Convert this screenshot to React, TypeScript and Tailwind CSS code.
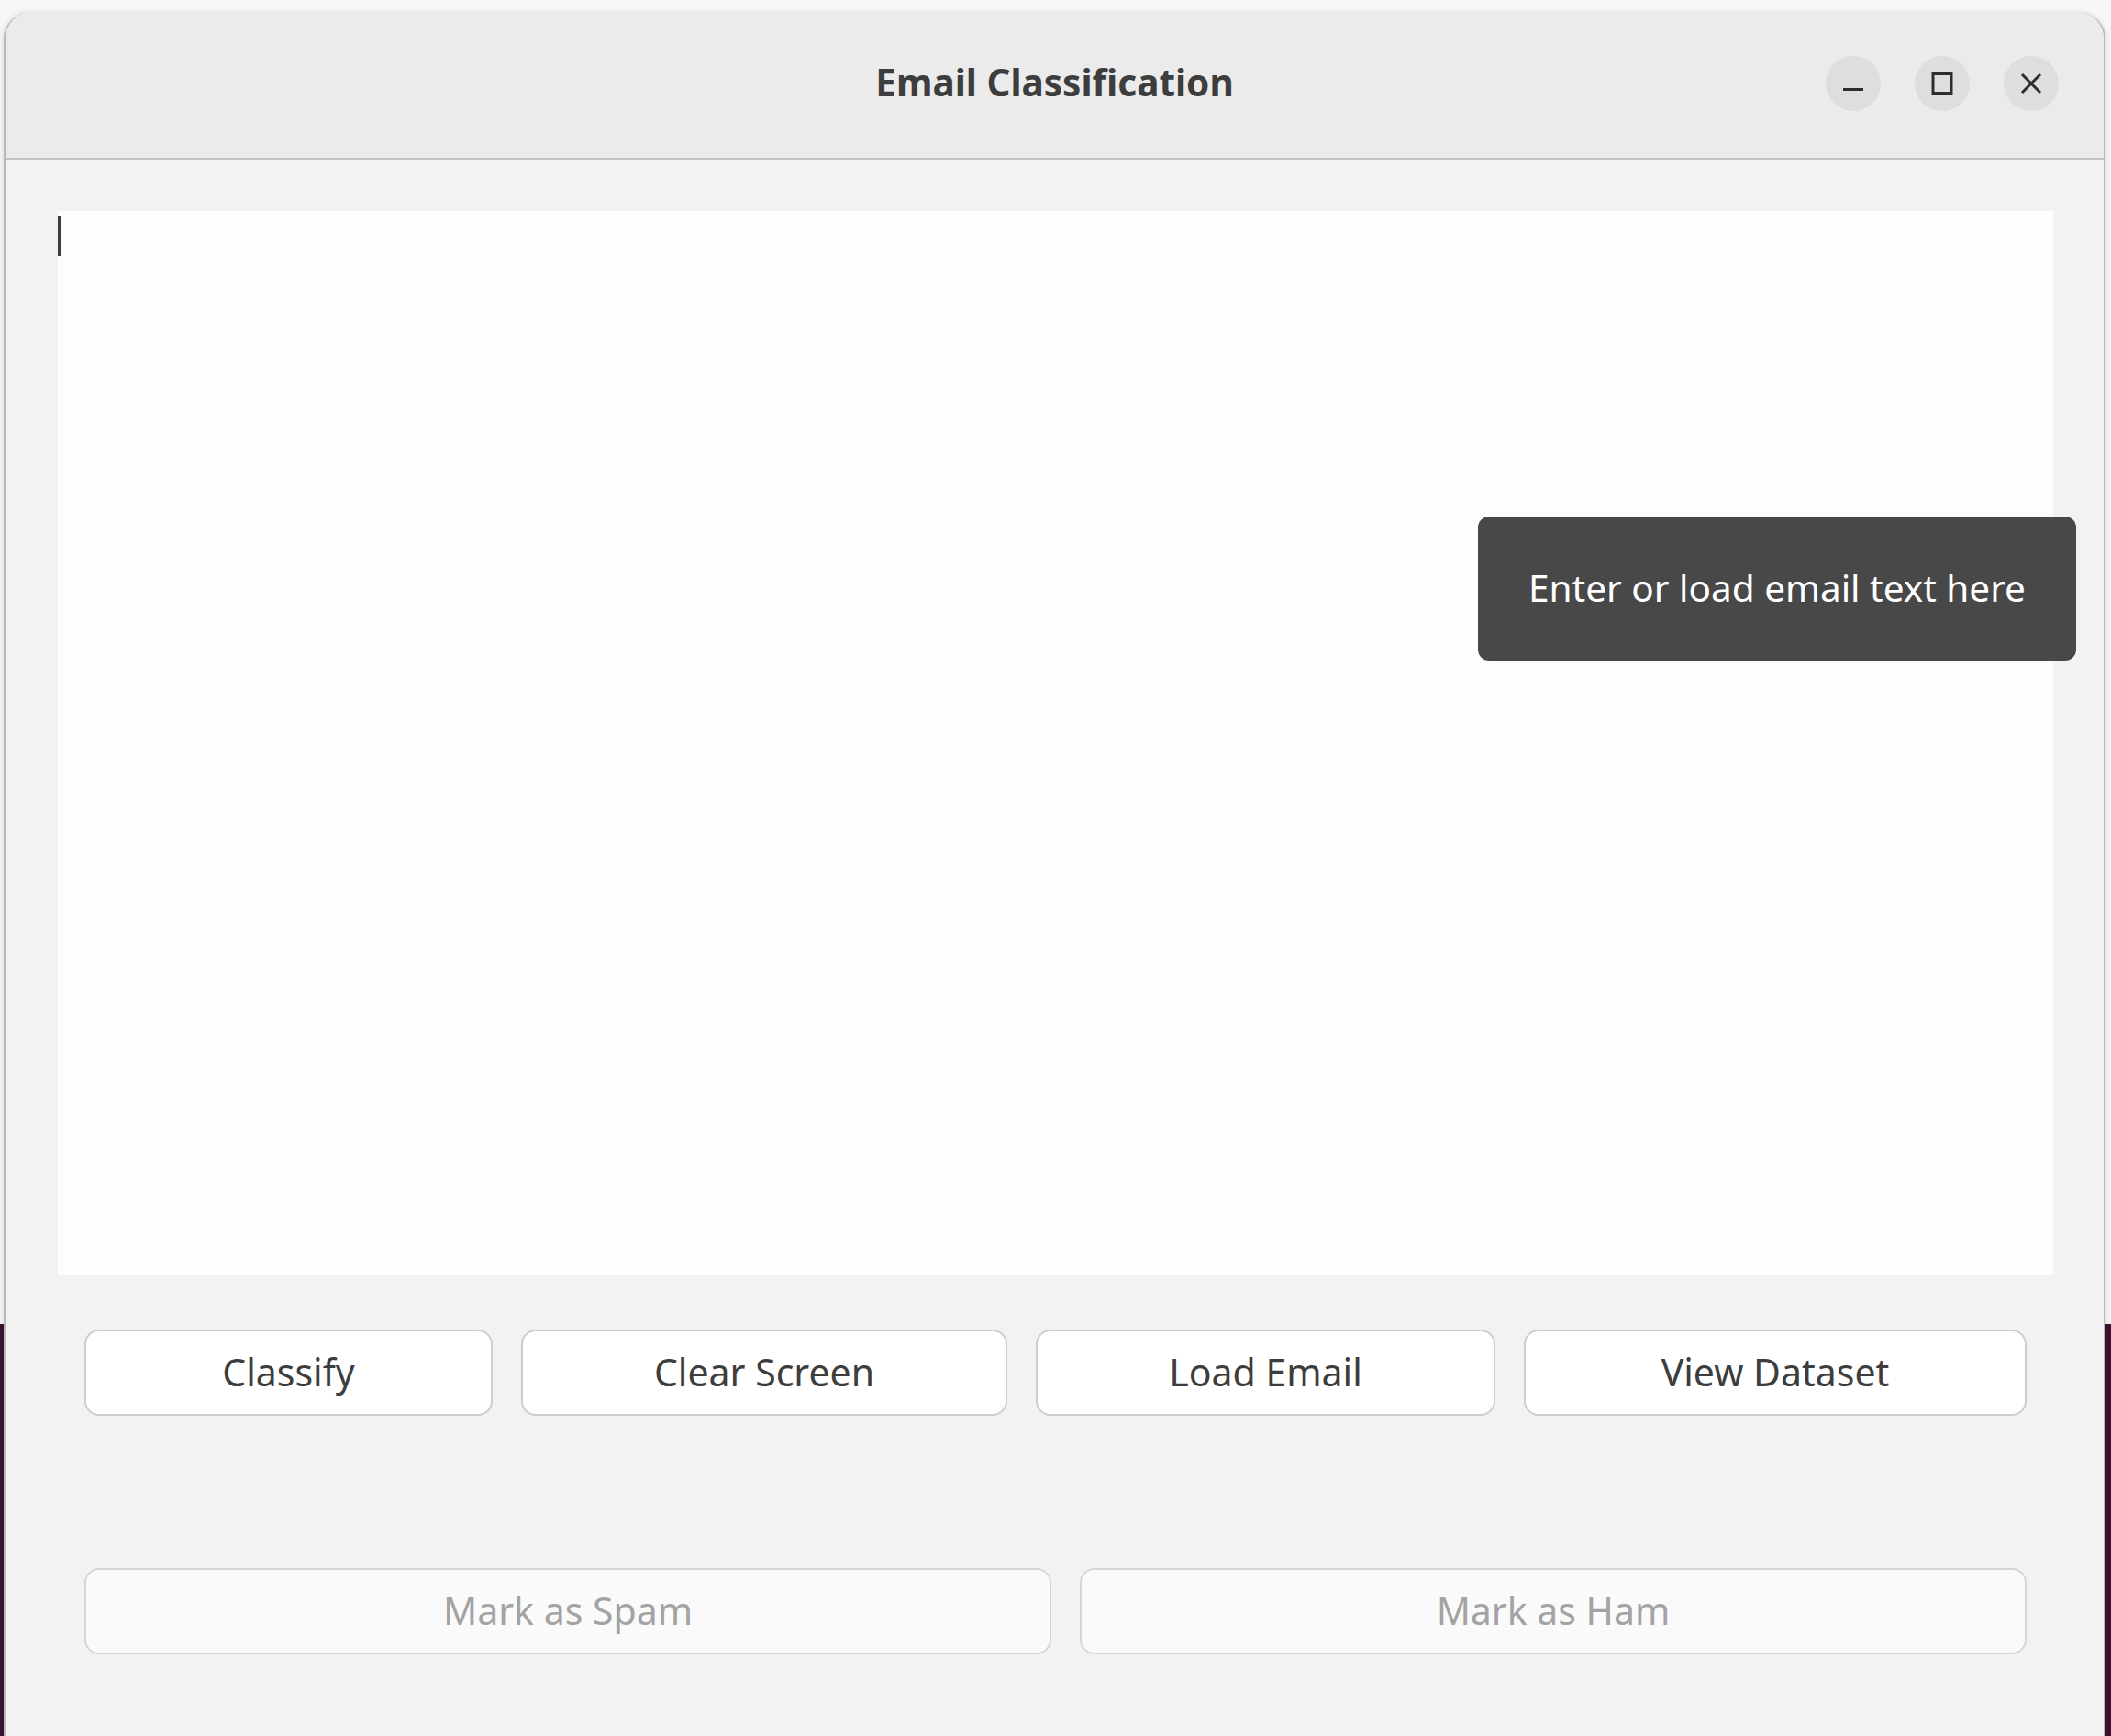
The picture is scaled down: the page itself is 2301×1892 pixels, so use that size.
import React from 'react';

const font = { fontFamily: '"Noto Sans", "Open Sans", sans-serif' };

const ActionButton = ({ label, width, disabled }: { label: string; width: string; disabled?: boolean }) => (
  <button
    disabled={disabled}
    className={
      disabled
        ? `${width} h-[94px] shrink-0 rounded-[16px] border-2 border-[#d6d6d6] bg-[#fafafa] text-[41px] text-[#a3a3a3]`
        : `${width} h-[94px] shrink-0 rounded-[16px] border-2 border-[#cdcdcd] bg-white text-[41px] text-[#3d3d3d]`
    }
  >
    {label}
  </button>
);

const App = () => {
  return (
    <div className="relative w-[2301px] h-[1892px] overflow-hidden" style={font}>
      {/* desktop behind the window */}
      <div className="flex flex-col h-full">
        <div className="h-[1443px] bg-[#f7f7f7]" />
        <div className="flex-1 bg-[#3a1230]" />
      </div>

      {/* window */}
      <div className="absolute left-[4px] top-[14px] w-[2291px] h-[1900px] flex flex-col rounded-t-[28px] bg-[#f2f2f2] border-l-2 border-r-2 border-[#b9b9b9] shadow-[0_0_6px_rgba(0,0,0,0.15)]">
        {/* title bar */}
        <div className="relative h-[160px] shrink-0 flex items-center justify-center pb-[6px] rounded-t-[28px] bg-[#ebebeb] border-b-2 border-[#c4c4c4]">
          <span className="text-[40.5px] font-bold text-[#3d3d3d]">Email Classification</span>
          <div className="absolute right-[49px] top-[47px] flex gap-[37px]">
            <div className="w-[60px] h-[60px] rounded-full bg-[#dedede] flex items-center justify-center">
              <svg width="26" height="26" viewBox="0 0 26 26">
                <rect x="2" y="18" width="22" height="3" fill="#2e2e2e" />
              </svg>
            </div>
            <div className="w-[60px] h-[60px] rounded-full bg-[#dedede] flex items-center justify-center">
              <svg width="26" height="26" viewBox="0 0 26 26">
                <rect x="3" y="2.5" width="20" height="21" fill="none" stroke="#2e2e2e" strokeWidth="3" />
              </svg>
            </div>
            <div className="w-[60px] h-[60px] rounded-full bg-[#dedede] flex items-center justify-center">
              <svg width="26" height="26" viewBox="0 0 26 26">
                <path d="M3 3 L23 23 M23 3 L3 23" stroke="#2e2e2e" strokeWidth="3" />
              </svg>
            </div>
          </div>
        </div>

        {/* body */}
        <div className="relative flex flex-col pl-[57px] pr-[55px] pt-[56px]">
          <div className="h-[1160px] bg-[#fdfdfd] pt-[5px]">
            <div className="w-[3px] h-[44px] bg-[#3d3d3d]" />
          </div>

          <div className="flex gap-[31px] px-[29px] mt-[59px]">
            <ActionButton label="Classify" width="w-[445px]" />
            <ActionButton label="Clear Screen" width="w-[530px]" />
            <ActionButton label="Load Email" width="w-[501px]" />
            <ActionButton label="View Dataset" width="w-[548px]" />
          </div>

          <div className="flex gap-[31px] px-[29px] mt-[166px]">
            <ActionButton label="Mark as Spam" width="w-[1054px]" disabled />
            <ActionButton label="Mark as Ham" width="w-[1032px]" disabled />
          </div>

          {/* tooltip */}
          <div className="absolute left-[1605px] top-[389px] w-[652px] h-[157px] rounded-[12px] bg-[#484848] flex items-center justify-center">
            <span className="text-[40.5px] text-white">Enter or load email text here</span>
          </div>
        </div>
      </div>
    </div>
  );
};

export default App;
